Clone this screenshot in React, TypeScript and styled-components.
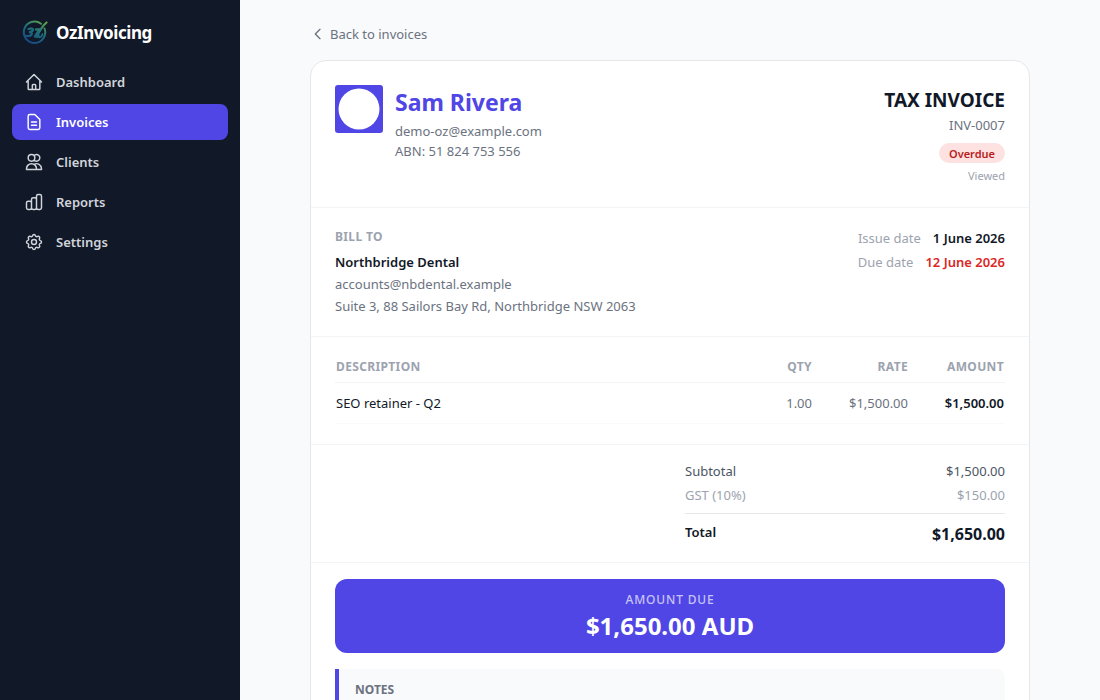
import React from 'react';
import styled, { createGlobalStyle, css } from 'styled-components';

const GlobalStyle = createGlobalStyle`
  *, *::before, *::after { box-sizing: border-box; }
  body {
    margin: 0;
    background: #f9fafb;
    color: #111827;
    font-family: 'Noto Sans', 'Open Sans', sans-serif;
    font-size: 13px;
    line-height: 20px;
  }
  h1, h2, h3, p, dl, dd { margin: 0; }
`;

const Shell = styled.div`
  display: flex;
  height: 100vh;
`;

const Sidebar = styled.aside`
  flex: none;
  width: 240px;
  padding: 16px 12px;
  background: #111827;
`;

const Brand = styled.a`
  display: flex;
  align-items: center;
  gap: 8px;
  height: 34px;
  padding: 0 10px;
  margin-bottom: 14px;
  color: #fff;
  font-size: 17px;
  font-weight: 700;
  line-height: 28px;
  letter-spacing: -0.025em;
  text-decoration: none;
`;

const Nav = styled.nav`
  display: flex;
  flex-direction: column;
  gap: 4px;
`;

const NavLink = styled.a<{ $active?: boolean }>`
  display: flex;
  align-items: center;
  gap: 12px;
  height: 36px;
  padding: 0 12px;
  border-radius: 8px;
  font-weight: 600;
  text-decoration: none;
  color: ${({ $active }) => ($active ? '#fff' : '#d1d5db')};
  background: ${({ $active }) => ($active ? '#4f46e5' : 'transparent')};
`;

const Main = styled.main`
  flex: 1;
  min-width: 0;
  padding: 24px;
  overflow-y: auto;
  scrollbar-width: none;
`;

const Column = styled.div`
  max-width: 720px;
  margin: 0 auto;
`;

const BackLink = styled.a`
  display: inline-flex;
  align-items: center;
  gap: 4px;
  margin-bottom: 16px;
  color: #6b7280;
  text-decoration: none;
  vertical-align: top;
`;

const Card = styled.article`
  overflow: hidden;
  border: 1px solid #e5e7eb;
  border-radius: 16px;
  background: #fff;
`;

const Section = styled.section<{ $pad: number }>`
  display: flex;
  justify-content: space-between;
  padding: ${({ $pad }) => $pad}px 24px;
  border-bottom: 1px solid #f3f4f6;
`;

const Business = styled.div`
  display: flex;
  align-items: flex-start;
  gap: 12px;
`;

const BusinessName = styled.h1`
  margin-bottom: 2px;
  color: #4f46e5;
  font-size: 23px;
  font-weight: 700;
  line-height: 34px;
`;

const Muted = styled.p`
  color: #6b7280;
`;

const DocumentInfo = styled.div`
  display: flex;
  flex-direction: column;
  align-items: flex-end;
`;

const DocumentTitle = styled.h2`
  font-size: 19px;
  font-weight: 700;
  line-height: 30px;
`;

const Badge = styled.span`
  margin: 8px 0 6px;
  padding: 2px 10px 0;
  border-radius: 10px;
  background: #fee2e2;
  color: #b91c1c;
  font-size: 11px;
  font-weight: 600;
  line-height: 18px;
`;

const Viewed = styled.span`
  color: #9ca3af;
  font-size: 11px;
  line-height: 14px;
`;

const caps = css`
  color: #9ca3af;
  font-size: 12px;
  font-weight: 700;
  line-height: 18px;
  letter-spacing: 0.03em;
  text-transform: uppercase;
`;

const BillTo = styled.div`
  display: flex;
  flex-direction: column;
  gap: 2px;
`;

const Caption = styled.h3`
  ${caps}
  margin-bottom: 4px;
`;

const ClientName = styled.p`
  font-weight: 600;
`;

const Dates = styled.dl`
  display: flex;
  flex-direction: column;
  gap: 4px;
`;

const DateRow = styled.div<{ $late?: boolean }>`
  display: flex;
  justify-content: flex-end;
  gap: 12px;
  dt { color: #9ca3af; }
  dd {
    font-weight: 600;
    color: ${({ $late }) => ($late ? '#dc2626' : '#111827')};
  }
`;

const Items = styled.table`
  width: 100%;
  table-layout: fixed;
  border-collapse: separate;
  border-spacing: 0;
`;

const Head = styled.th<{ $numeric?: boolean }>`
  ${caps}
  width: ${({ $numeric }) => ($numeric ? '96px' : 'auto')};
  padding: 1px 1px 6px;
  border-bottom: 1px solid #f3f4f6;
  text-align: ${({ $numeric }) => ($numeric ? 'right' : 'left')};
`;

const Cell = styled.td<{ $tone?: 'muted' | 'strong' }>`
  padding: 10px 1px;
  border-bottom: 1px solid #f9fafb;
  color: ${({ $tone }) => ($tone === 'muted' ? '#6b7280' : '#111827')};
  font-weight: ${({ $tone }) => ($tone === 'strong' ? 600 : 400)};
  text-align: ${({ $tone }) => ($tone ? 'right' : 'left')};
`;

const Totals = styled.dl`
  display: flex;
  flex-direction: column;
  gap: 4px;
  width: 320px;
  margin-left: auto;
`;

const TotalRow = styled.div<{ $color: string }>`
  display: flex;
  justify-content: space-between;
  color: ${({ $color }) => $color};
`;

const GrandTotal = styled(TotalRow)`
  margin-top: 4px;
  padding-top: 8px;
  border-top: 1px solid #e5e7eb;
  font-weight: 600;
  dd {
    font-size: 16px;
    font-weight: 700;
    line-height: 24px;
  }
`;

const Footer = styled.footer`
  display: flex;
  flex-direction: column;
  gap: 16px;
  padding: 16px 24px 24px;
`;

const AmountDue = styled.div`
  padding: 12px 12px 10px;
  border-radius: 12px;
  background: #4f46e5;
  color: #fff;
  text-align: center;
`;

const AmountLabel = styled.p`
  color: #c7c3f7;
  font-size: 12px;
  font-weight: 500;
  line-height: 18px;
  letter-spacing: 0.07em;
  text-transform: uppercase;
`;

const AmountValue = styled.p`
  font-size: 24px;
  font-weight: 700;
  line-height: 34px;
`;

const Notes = styled.section`
  min-height: 80px;
  padding: 12px 16px;
  border-left: 4px solid #4f46e5;
  border-radius: 0 8px 8px 0;
  background: #f9fafb;
`;

const NotesTitle = styled.h3`
  color: #6b7280;
  font-size: 12px;
  font-weight: 700;
  line-height: 18px;
`;

const icons = {
  home: 'M3 12l2-2m0 0l7-7 7 7M5 10v10a1 1 0 001 1h3m10-11l2 2m-2-2v10a1 1 0 01-1 1h-3m-6 0a1 1 0 001-1v-4a1 1 0 011-1h2a1 1 0 011 1v4a1 1 0 001 1m-6 0h6',
  document:
    'M9 12h6m-6 4h6m2 5H7a2 2 0 01-2-2V5a2 2 0 012-2h5.586a1 1 0 01.707.293l5.414 5.414a1 1 0 01.293.707V19a2 2 0 01-2 2z',
  users:
    'M12 4.354a4 4 0 110 5.292M15 21H3v-1a6 6 0 0112 0v1zm0 0h6v-1a6 6 0 00-9-5.197M13 7a4 4 0 11-8 0 4 4 0 018 0z',
  chart:
    'M9 19v-6a2 2 0 00-2-2H5a2 2 0 00-2 2v6a2 2 0 002 2h2a2 2 0 002-2zm0 0V9a2 2 0 012-2h2a2 2 0 012 2v10m-6 0a2 2 0 002 2h2a2 2 0 002-2m0 0V5a2 2 0 012-2h2a2 2 0 012 2v14a2 2 0 01-2 2h-2a2 2 0 01-2-2z',
  cog: 'M10.325 4.317c.426-1.756 2.924-1.756 3.35 0a1.724 1.724 0 002.573 1.066c1.543-.94 3.31.826 2.37 2.37a1.724 1.724 0 001.065 2.572c1.756.426 1.756 2.924 0 3.35a1.724 1.724 0 00-1.066 2.573c.94 1.543-.826 3.31-2.37 2.37a1.724 1.724 0 00-2.572 1.065c-.426 1.756-2.924 1.756-3.35 0a1.724 1.724 0 00-2.573-1.066c-1.543.94-3.31-.826-2.37-2.37a1.724 1.724 0 00-1.065-2.572c-1.756-.426-1.756-2.924 0-3.35a1.724 1.724 0 001.066-2.573c-.94-1.543.826-3.31 2.37-2.37.996.608 2.296.07 2.572-1.065zM15 12a3 3 0 11-6 0 3 3 0 016 0z',
  back: 'M15 19l-7-7 7-7',
};

function Icon({ name, size = 20 }: { name: keyof typeof icons; size?: number }) {
  return (
    <svg
      width={size}
      height={size}
      viewBox="0 0 24 24"
      fill="none"
      stroke="currentColor"
      strokeWidth={size === 20 ? 1.75 : 2}
      strokeLinecap="round"
      strokeLinejoin="round"
      aria-hidden="true"
    >
      <path d={icons[name]} />
    </svg>
  );
}

function BrandMark() {
  return (
    <svg width="26" height="26" viewBox="0 0 26 26" fill="none" strokeLinecap="round" strokeLinejoin="round" aria-hidden="true">
      <defs>
        <linearGradient id="ring" x1="20" y1="2" x2="8" y2="25" gradientUnits="userSpaceOnUse">
          <stop offset="0" stopColor="#5a9e4b" />
          <stop offset="0.4" stopColor="#1f6f7c" />
          <stop offset="1" stopColor="#154587" />
        </linearGradient>
      </defs>
      <g stroke="url(#ring)">
        <path d="M19 3.800A10.700 10.700 0 1 0 22.500 8.500" strokeWidth="2" />
        <path d="M6.500 9c2-.8 4.800-.4 4.500 1-.3 1.200-1.800 1.900-3.300 2.100 1.800.1 2.600 1 2 2.300-.9 1.600-3.500 2-6.200 1.300" strokeWidth="2.200" />
        <path d="M14 9.500h3.500l-4.500 7h4" strokeWidth="2.400" />
        <path d="M15 17C17.500 10.500 20.500 6 24.500 2.500" strokeWidth="2.200" />
        <path d="M17.500 17.500c1.600-.4 2.600-1.600 3-3.500" strokeWidth="1.600" />
      </g>
    </svg>
  );
}

function BusinessLogo() {
  return (
    <svg width="48" height="48" viewBox="0 0 48 48" role="img" aria-label="Sam Rivera">
      <rect width="48" height="48" rx="3" fill="#4f46e5" />
      <circle cx="24" cy="24" r="20.500" fill="#fff" />
    </svg>
  );
}

const navigation: { label: string; icon: keyof typeof icons; active?: boolean }[] = [
  { label: 'Dashboard', icon: 'home' },
  { label: 'Invoices', icon: 'document', active: true },
  { label: 'Clients', icon: 'users' },
  { label: 'Reports', icon: 'chart' },
  { label: 'Settings', icon: 'cog' },
];

export default function App() {
  return (
    <Shell>
      <GlobalStyle />
      <Sidebar>
        <Brand href="#">
          <BrandMark />
          OzInvoicing
        </Brand>
        <Nav>
          {navigation.map(({ label, icon, active }) => (
            <NavLink key={label} href="#" $active={active} aria-current={active ? 'page' : undefined}>
              <Icon name={icon} />
              {label}
            </NavLink>
          ))}
        </Nav>
      </Sidebar>
      <Main>
        <Column>
          <BackLink href="#">
            <Icon name="back" size={16} />
            Back to invoices
          </BackLink>
          <Card>
            <Section $pad={24}>
              <Business>
                <BusinessLogo />
                <div>
                  <BusinessName>Sam Rivera</BusinessName>
                  <Muted>demo-oz@example.com</Muted>
                  <Muted>ABN: 51 824 753 556</Muted>
                </div>
              </Business>
              <DocumentInfo>
                <DocumentTitle>TAX INVOICE</DocumentTitle>
                <Muted>INV-0007</Muted>
                <Badge>Overdue</Badge>
                <Viewed>Viewed</Viewed>
              </DocumentInfo>
            </Section>
            <Section $pad={20}>
              <BillTo>
                <Caption>Bill to</Caption>
                <ClientName>Northbridge Dental</ClientName>
                <Muted>accounts@nbdental.example</Muted>
                <Muted>Suite 3, 88 Sailors Bay Rd, Northbridge NSW 2063</Muted>
              </BillTo>
              <Dates>
                <DateRow>
                  <dt>Issue date</dt>
                  <dd>1 June 2026</dd>
                </DateRow>
                <DateRow $late>
                  <dt>Due date</dt>
                  <dd>12 June 2026</dd>
                </DateRow>
              </Dates>
            </Section>
            <Section $pad={20}>
              <Items>
                <thead>
                  <tr>
                    <Head>Description</Head>
                    <Head $numeric>Qty</Head>
                    <Head $numeric>Rate</Head>
                    <Head $numeric>Amount</Head>
                  </tr>
                </thead>
                <tbody>
                  <tr>
                    <Cell>SEO retainer - Q2</Cell>
                    <Cell $tone="muted">1.00</Cell>
                    <Cell $tone="muted">$1,500.00</Cell>
                    <Cell $tone="strong">$1,500.00</Cell>
                  </tr>
                </tbody>
              </Items>
            </Section>
            <Section $pad={16}>
              <Totals>
                <TotalRow $color="#4b5563">
                  <dt>Subtotal</dt>
                  <dd>$1,500.00</dd>
                </TotalRow>
                <TotalRow $color="#9ca3af">
                  <dt>GST (10%)</dt>
                  <dd>$150.00</dd>
                </TotalRow>
                <GrandTotal $color="#111827">
                  <dt>Total</dt>
                  <dd>$1,650.00</dd>
                </GrandTotal>
              </Totals>
            </Section>
            <Footer>
              <AmountDue>
                <AmountLabel>Amount due</AmountLabel>
                <AmountValue>$1,650.00 AUD</AmountValue>
              </AmountDue>
              <Notes>
                <NotesTitle>NOTES</NotesTitle>
              </Notes>
            </Footer>
          </Card>
        </Column>
      </Main>
    </Shell>
  );
}
